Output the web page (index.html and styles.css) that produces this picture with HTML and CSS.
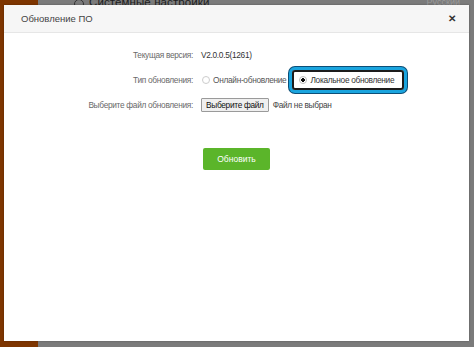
FILE: index.html
```html
<!DOCTYPE html>
<html>
<head>
    <meta charset="utf-8">
    <link rel="stylesheet" href="styles.css">
</head>
<body>
    <div class="page">
        <div class="sidebar"></div>
        <div class="main">
            <div class="topbar">
                <span class="top-icon"></span>
                <span class="top-title">Системные настройки</span>
                <span class="top-lang">Русский</span>
            </div>
        </div>
    </div>

    <div class="modal">
        <div class="modal-header">
            <span class="modal-title">Обновление ПО</span>
            <span class="modal-close">&#10005;</span>
        </div>
        <div class="modal-body">
            <div class="form">
                <div class="label">Текущая версия:</div>
                <div class="value">V2.0.0.5(1261)</div>

                <div class="label">Тип обновления:</div>
                <div class="value radios">
                    <span class="radio-item"><span class="radio"></span>Онлайн-обновление</span>
                    <span class="radio-item highlight"><span class="radio checked"></span>Локальное обновление</span>
                </div>

                <div class="label">Выберите файл обновления:</div>
                <div class="value">
                    <span class="file-btn">Выберите файл</span>
                    <span class="file-name">Файл не выбран</span>
                </div>
            </div>
            <div class="actions">
                <span class="btn-update">Обновить</span>
            </div>
        </div>
    </div>
</body>
</html>
```

FILE: styles.css
```css
body {
    margin: 0;
    width: 474px;
    height: 347px;
    overflow: hidden;
    font-family: "Liberation Sans", Arial, sans-serif;
    position: relative;
}

.page {
    display: flex;
    height: 347px;
}

.sidebar {
    width: 38px;
    background: #7e3500;
}

.main {
    flex: 1;
    background: #7b7b7b;
}

.topbar {
    display: flex;
    align-items: flex-end;
    height: 6px;
    padding-left: 36px;
    padding-right: 14px;
    overflow: hidden;
}

.top-icon {
    width: 8px;
    height: 8px;
    border: 1px solid #333;
    border-radius: 50%;
    margin-right: 5px;
    margin-bottom: -3px;
}

.top-title {
    font-size: 11.5px;
    color: #1e1e1e;
    line-height: 10px;
    margin-bottom: -1px;
    letter-spacing: 0.1px;
}

.top-lang {
    margin-left: auto;
    font-size: 9px;
    color: #9a9a9a;
    line-height: 8px;
}

.modal {
    position: absolute;
    left: 4px;
    top: 5px;
    width: 465px;
    height: 336px;
    background: #fff;
    box-shadow: 0 0 2px rgba(0, 0, 0, 0.3);
}

.modal-header {
    display: flex;
    align-items: center;
    justify-content: space-between;
    height: 27px;
    padding: 0 13px 0 17px;
    background: #f6f6f6;
    border-bottom: 1px solid #e6e6e6;
}

.modal-title {
    font-size: 9.5px;
    color: #444;
}

.modal-close {
    font-size: 10px;
    font-weight: bold;
    color: #333;
}

.modal-body {
    padding-top: 9px;
}

.form {
    display: grid;
    grid-template-columns: 189px auto;
    column-gap: 8px;
    grid-auto-rows: 25px;
    align-items: center;
    font-size: 8.3px;
    letter-spacing: -0.3px;
}

.label {
    text-align: right;
    color: #6a6a6a;
}

.value {
    color: #333;
    display: flex;
    align-items: center;
}

.radios {
    gap: 6px;
}

.radio-item {
    display: flex;
    align-items: center;
    color: #555;
}

.radio {
    width: 6px;
    height: 6px;
    border: 1px solid #ccc;
    border-radius: 50%;
    margin-left: 1px;
    margin-right: 3px;
    background: #fff;
}

.radio.checked {
    border-color: #bbb;
    background: radial-gradient(circle, #111 0 1.6px, #fff 2px);
}

.highlight {
    padding: 3px 8px 3px 4px;
    border: 2px solid #1c1c1c;
    border-radius: 3px;
    color: #333;
    box-shadow: 0 0 0 3px #1aa4de, 0 0 0 4px #0c4f78;
}

.file-btn {
    padding: 1px 4px;
    background: #efefef;
    border: 1px solid #9a9a9a;
    border-radius: 1px;
    color: #111;
}

.file-name {
    margin-left: 4px;
    color: #444;
}

.actions {
    display: flex;
    justify-content: center;
    margin-top: 31px;
}

.btn-update {
    width: 67px;
    height: 22px;
    line-height: 22px;
    text-align: center;
    background: #5bb52a;
    border-radius: 2px;
    color: #fff;
    font-size: 8.5px;
}
```
